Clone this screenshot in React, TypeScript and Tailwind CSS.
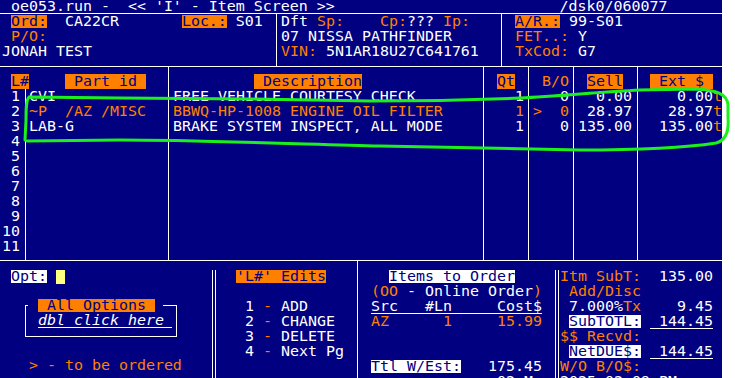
import React from "react";

type Kind = "w" | "o" | "O" | "W" | "H" | "u" | "i" | "C";
type Seg = [string, Kind?];

const kinds: Record<Kind, string> = {
  w: "text-white",
  o: "text-[#ff8000]",
  O: "inline-block h-[13px] mt-[1px] align-top leading-[13px] bg-[#ff8000] text-[#000080]",
  W: "inline-block h-[13px] mt-[1px] align-top leading-[13px] bg-white text-[#000080]",
  H: "inline-block h-[15px] align-top leading-[15px] bg-[#ff8000] text-[#000080]",
  u: "inline-block h-[15px] align-top border-b border-white text-white",
  i: "inline-block h-[15px] w-[134px] align-top border-b border-white text-white italic",
  C: "inline-block h-[14px] w-[9px] mt-[1px] align-top leading-[14px] bg-[#ffff80]",
};

const Line = ({ segs = [], className = "" }: { segs?: Seg[]; className?: string }) => (
  <div className={`h-[15px] leading-[15px] whitespace-pre ${className}`}>
    {segs.map(([t, k = "w"], i) => (
      <span key={i} className={kinds[k]}>
        {t}
      </span>
    ))}
  </div>
);

interface ItemRow {
  part: Seg[];
  desc: Seg[];
  qt: Seg[];
  bo: Seg[];
  sell: Seg[];
  ext: Seg[];
}

const items: ItemRow[] = [
  {
    part: [["CVI"]],
    desc: [["FREE VEHICLE COURTESY CHECK"]],
    qt: [["   1"]],
    bo: [["   0"]],
    sell: [["  0.00"]],
    ext: [["    0.00"], ["t", "o"]],
  },
  {
    part: [["~P  /AZ /MISC", "o"]],
    desc: [["BBWQ-HP-1008 ENGINE OIL FILTER", "o"]],
    qt: [["   1", "o"]],
    bo: [[">  0", "o"]],
    sell: [[" 28.97"]],
    ext: [["   28.97"], ["t", "o"]],
  },
  {
    part: [["LAB-G"]],
    desc: [["BRAKE SYSTEM INSPECT, ALL MODE"]],
    qt: [["   1"]],
    bo: [["   0"]],
    sell: [["135.00"]],
    ext: [["  135.00"], ["t", "o"]],
  },
];

const lineNums = Array.from({ length: 11 }, (_, i) => i + 1);

// columns right of "Part id", each with its own full-height rule on the left
const cols: { key: keyof ItemRow; cls: string; head: Seg[] }[] = [
  { key: "desc", cls: "w-[315px] pl-[4px]", head: [["         "], [" Description", "H"]] },
  { key: "qt", cls: "w-[45px] pl-[4px]", head: [[" "], ["Qt", "H"]] },
  { key: "bo", cls: "w-[45px] pl-[4px]", head: [[" "], ["B/O", "o"]] },
  { key: "sell", cls: "w-[64px] pl-[4px]", head: [[" "], ["Sell", "H"]] },
  { key: "ext", cls: "flex-1 pl-[3px]", head: [[" "], [" Ext $ ", "H"]] },
];

const Annotation = () => (
  <svg
    className="pointer-events-none absolute left-0 top-0"
    width={735}
    height={378}
    viewBox="0 0 735 378"
  >
    <path
      d="M29 97 C 26 100, 26 110, 26 120 L 25 140 M 27 141 L 120 140 C 200 140, 300 144, 380 146 C 450 148, 520 149, 580 150 C 640 150, 690 147, 716 143 C 727 140, 729 130, 728 118 L 728 105 C 727 93, 715 90, 695 89 L 640 90 C 600 92, 560 96, 520 98 C 470 100, 420 101, 370 101 L 250 99 L 120 98 L 29 97"
      fill="none"
      stroke="#1cf01c"
      strokeWidth={3}
      strokeLinecap="round"
      strokeLinejoin="round"
    />
  </svg>
);

export default function App() {
  return (
    <div className="relative h-[378px] w-[735px] overflow-hidden bg-white font-['DejaVu_Sans_Mono',monospace] text-[14.95px] text-white">
      <div className="flex h-full w-[722px] flex-col bg-[#000080]">
        {/* title */}
        <div className="h-[14px] overflow-hidden whitespace-pre border-b border-white pl-[2px] leading-[13px]">
          {" oe053.run -  << 'I' - Item Screen >>                         /dsk0/060077"}
        </div>

        {/* order header */}
        <div className="flex h-[53px] border-b border-white">
          <div className="w-[277px] border-r border-white pl-[2px]">
            <Line segs={[[" "], ["Ord:", "O"], ["  CA22CR       "], ["Loc.:", "O"], [" S01"]]} />
            <Line segs={[[" "], ["P/O:", "o"]]} />
            <Line segs={[["JONAH TEST"]]} />
          </div>
          <div className="w-[225px] border-r border-white pl-[4px]">
            <Line
              segs={[["Dft "], ["Sp:", "o"], ["    "], ["Cp:", "o"], ["???"], [" "], ["Ip:", "o"]]}
            />
            <Line segs={[["07 NISSA PATHFINDER"]]} />
            <Line segs={[["VIN:", "o"], [" 5N1AR18U27C641761"]]} />
          </div>
          <div className="flex-1 pl-[4px]">
            <Line segs={[[" "], ["A/R.:", "O"], [" 99-S01"]]} />
            <Line segs={[[" "], ["FET..:", "o"], [" Y"]]} />
            <Line segs={[[" "], ["TxCod:", "o"], [" G7"]]} />
          </div>
        </div>

        {/* item lines */}
        <div className="flex h-[194px] border-b border-white">
          <div className="relative z-10 w-[25px] pt-[7px] pl-[2px]">
            <Line segs={[[" "], ["L#", "H"]]} />
            {lineNums.map((n) => (
              <Line key={n} segs={[[String(n).padStart(2)]]} />
            ))}
          </div>
          <div className="flex w-[143px] flex-col pt-[7px]">
            <Line className="pl-[4px]" segs={[["    "], [" Part id ", "H"]]} />
            <div className="flex-1 border-l border-white pl-[3px]">
              {lineNums.map((n) => (
                <Line key={n} segs={items[n - 1]?.part} />
              ))}
            </div>
          </div>
          {cols.map((c) => (
            <div key={c.key} className={`border-l border-white pt-[7px] ${c.cls}`}>
              <Line segs={c.head} />
              {lineNums.map((n) => (
                <Line key={n} segs={items[n - 1]?.[c.key]} />
              ))}
            </div>
          ))}
        </div>

        {/* bottom panels */}
        <div className="flex flex-1 overflow-hidden">
          <div className="w-[212px] pt-[8px] pl-[2px]">
            <Line segs={[[" "], ["Opt:", "W"], [" "], [" ", "C"]]} />
            <fieldset className="mt-[14px] ml-[23px] w-[152px] border border-white p-0">
              <legend className="ml-[2px] p-0 pl-[10px] pr-[8px]">
                <Line segs={[[" All Options ", "O"]]} />
              </legend>
              <div className="pl-[12px] pb-[8px]">
                <Line segs={[["dbl click here", "i"]]} />
              </div>
            </fieldset>
            <Line className="mt-[21px]" segs={[["   "], ["> - to be ordered", "o"]]} />
          </div>
          <div className="mt-[9px] w-[4px] border-x border-white" />
          <div className="w-[142px] border-r border-white pt-[8px] pl-[2px]">
            <Line segs={[["  "], ["'L#' Edits", "O"]]} />
            <Line />
            <Line segs={[["   1 "], ["-", "o"], [" ADD"]]} />
            <Line segs={[["   2 "], ["-", "o"], [" CHANGE"]]} />
            <Line segs={[["   3 "], ["-", "o"], [" DELETE"]]} />
            <Line segs={[["   4 "], ["-", "o"], [" Next Pg"]]} />
          </div>
          <div className="w-[197px] pt-[8px] pl-[4px]">
            <Line segs={[["   "], ["Items to Order", "W"]]} />
            <Line segs={[[" "], ["(OO", "o"], [" - Online Order"], [")", "o"]]} />
            <Line segs={[[" "], ["Src   #Ln     Cost$", "u"]]} />
            <Line segs={[[" "], ["AZ      1     15.99", "o"]]} />
            <Line />
            <Line />
            <Line segs={[[" "], ["Ttl W/Est:", "W"], ["   175.45"]]} />
            <Line segs={[["               02 Mar"]]} />
          </div>
          <div className="mt-[9px] w-[4px] border-x border-white" />
          <div className="flex-1 pt-[8px] pl-[1px]">
            <Line segs={[["Itm SubT:", "o"], ["  135.00"]]} />
            <Line segs={[[" "], ["Add/Disc", "o"]]} />
            <Line segs={[[" 7.000%"], ["Tx", "o"], ["    9.45"]]} />
            <Line segs={[[" "], ["SubTOTL:", "W"], [" "], [" 144.45", "u"]]} />
            <Line segs={[["$$ Recvd:", "o"]]} />
            <Line segs={[[" "], ["NetDUE$:", "W"], [" "], [" 144.45", "u"]]} />
            <Line segs={[["W/O B/O$:", "o"]]} />
            <Line segs={[["2025 02:09 PM"]]} />
          </div>
        </div>
      </div>
      <Annotation />
    </div>
  );
}
